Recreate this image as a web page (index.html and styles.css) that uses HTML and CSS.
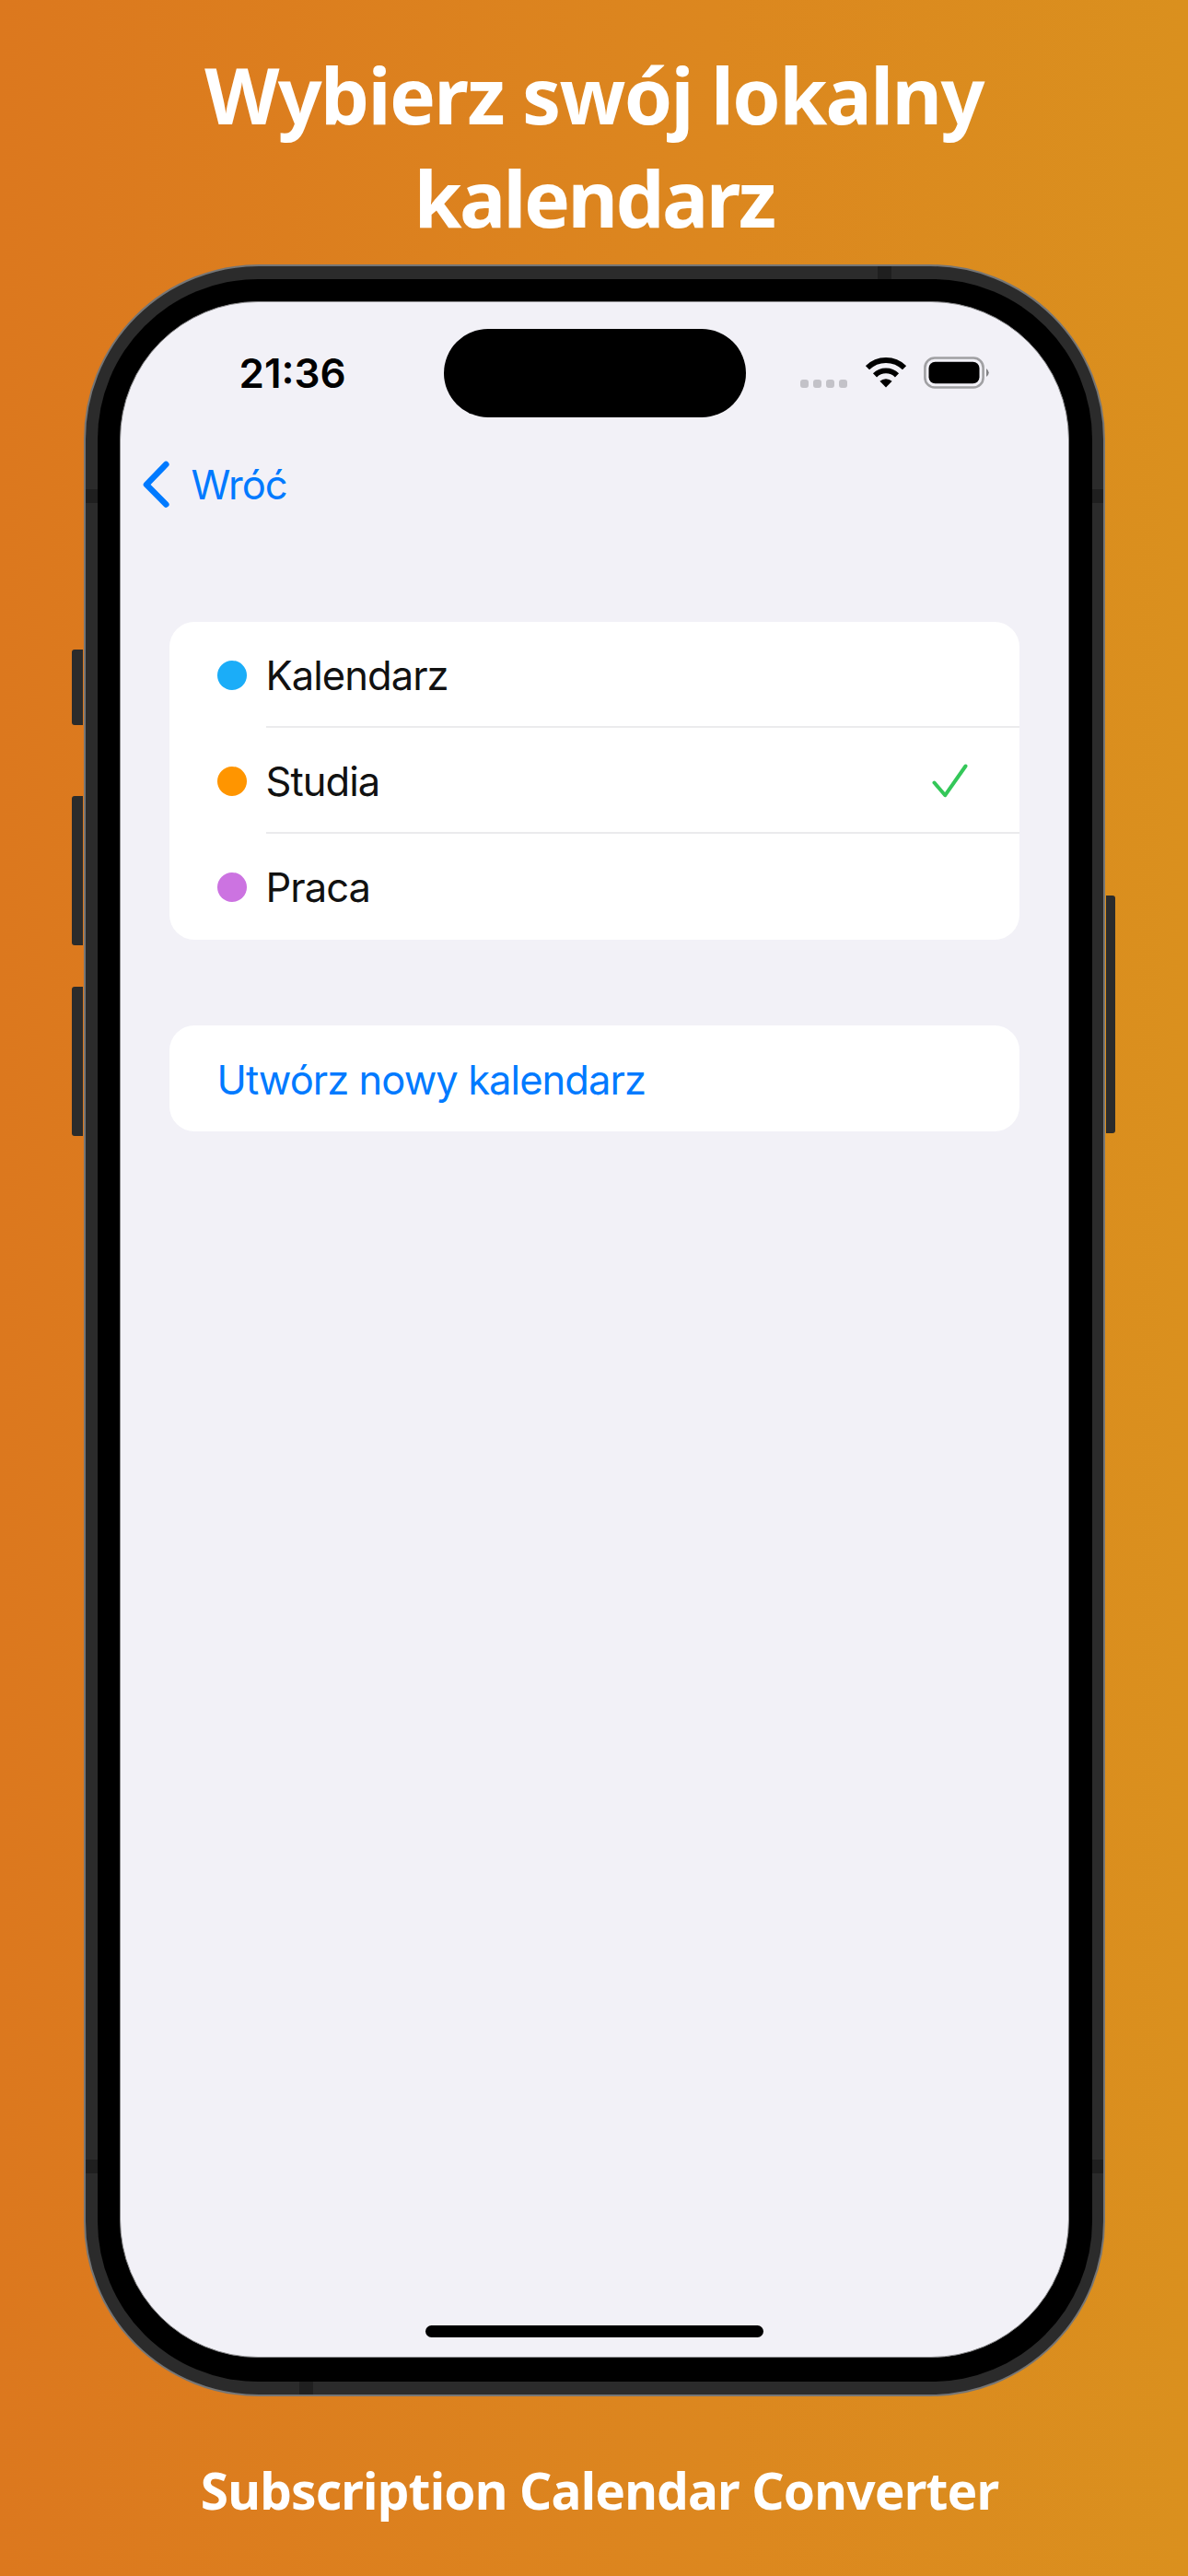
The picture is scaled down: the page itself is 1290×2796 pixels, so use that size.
FILE: index.html
```html
<!DOCTYPE html>
<html lang="pl">
<head>
<meta charset="utf-8">
<title>Subscription Calendar Converter</title>
<link rel="stylesheet" href="styles.css">
</head>
<body>
<main class="poster">
  <h1 class="headline">
    <span class="headline-top">Wybierz swój lokalny</span>
    <span class="headline-bottom">kalendarz</span>
  </h1>

  <div class="phone">
    <i class="key key-action"></i>
    <i class="key key-up"></i>
    <i class="key key-down"></i>
    <i class="key key-power"></i>
    <i class="band band-top"></i>
    <i class="band band-bottom"></i>
    <i class="band band-left band-upper"></i>
    <i class="band band-right band-upper"></i>
    <i class="band band-left band-lower"></i>
    <i class="band band-right band-lower"></i>
    <div class="bezel">
      <div class="screen">
        <header class="status">
          <span class="time">21:36</span>
          <span class="island"></span>
          <span class="indicators">
            <span class="signal"><i></i><i></i><i></i><i></i></span>
            <svg class="wifi" width="44" height="33" viewBox="0 0 44 33">
              <g fill="none" stroke="#000" stroke-width="5.8">
                <path d="M2 11.2A28.5 28.5 0 0 1 42 11.2"/>
                <path d="M10 19.4A17 17 0 0 1 34 19.4"/>
              </g>
              <path d="M22 32.4L15.4 25.8A9.6 9.6 0 0 1 28.6 25.8Z"/>
            </svg>
            <svg class="battery" width="72" height="35" viewBox="0 0 72 35">
              <rect x="1.4" y="1.5" width="63.2" height="32" rx="10.5" fill="none" stroke="#a0a0a3" stroke-width="2.6"/>
              <rect x="5.5" y="5.7" width="55" height="23.6" rx="7"/>
              <path d="M68 13Q73.5 17.5 68 22Z" fill="#828286"/>
            </svg>
          </span>
        </header>

        <nav class="back">
          <svg width="30" height="52" viewBox="0 0 30 52">
            <path d="M25.3 4L4 26L25.3 47.5" fill="none" stroke="#007aff" stroke-width="6.6" stroke-linecap="round" stroke-linejoin="round"/>
          </svg>
          <span>Wróć</span>
        </nav>

        <ul class="card calendars">
          <li class="row"><i class="dot blue"></i><span class="label">Kalendarz</span></li>
          <li class="row"><i class="dot orange"></i><span class="label">Studia
            <svg class="check" width="40" height="40" viewBox="0 0 40 40">
              <path d="M3.5 21.5L15.3 35.2L37.5 3.5" fill="none" stroke="#34c759" stroke-width="4" stroke-linecap="round" stroke-linejoin="round"/>
            </svg></span></li>
          <li class="row"><i class="dot purple"></i><span class="label">Praca</span></li>
        </ul>

        <div class="card create">Utwórz nowy kalendarz</div>

        <div class="home"></div>
      </div>
    </div>
  </div>

  <footer class="brand">Subscription Calendar Converter</footer>
</main>
</body>
</html>
```
FILE: styles.css
```css
* {
  box-sizing: border-box;
}

body {
  margin: 0;
}

.poster {
  width: 1290px;
  height: 2796px;
  overflow: hidden;
  display: flex;
  flex-direction: column;
  align-items: center;
  background: linear-gradient(90deg, #dc781e, #dc871f 60%, #da901e);
  font-family: "Noto Sans", "Open Sans", sans-serif;
  color: #fff;
}

.headline {
  margin: 0;
  padding-top: 47px;
  height: 287px;
  flex: none;
  display: flex;
  flex-direction: column;
  align-items: center;
  font-size: 84px;
  font-weight: 700;
  line-height: 112px;
  letter-spacing: -1.7px;
  white-space: nowrap;
}

.headline-bottom {
  letter-spacing: -2.6px;
}

.phone {
  position: relative;
  flex: none;
  width: 1109px;
  height: 2314px;
  padding: 14px 12px 14px 13px;
  border: 2px solid #767676;
  border-radius: 190px;
  background: #2b2b2b;
}

.key {
  position: absolute;
  width: 12px;
  left: -15px;
  border-radius: 3px 0 0 3px;
  background: #2b2b2b;
}

.key-action {
  top: 416px;
  height: 82px;
}

.key-up {
  top: 575px;
  height: 162px;
}

.key-down {
  top: 782px;
  height: 162px;
}

.key-power {
  left: 1108px;
  top: 683px;
  width: 10px;
  height: 258px;
  border-radius: 0 3px 3px 0;
}

.band {
  position: absolute;
  width: 15px;
  height: 15px;
  background: #1f1f1f;
}

.band-top {
  left: 860px;
  top: 0;
}

.band-bottom {
  left: 232px;
  bottom: 0;
}

.band-left {
  left: 0;
}

.band-right {
  right: 0;
}

.band-upper {
  top: 242px;
}

.band-lower {
  top: 2055px;
}

.bezel {
  position: relative;
  height: 100%;
  padding: 24px 25px 26px 24px;
  border-radius: 174px;
  background: #000;
}

.screen {
  height: 100%;
  display: flex;
  flex-direction: column;
  border: 1px solid #8b8b8d;
  border-radius: 150px;
  background: #f2f1f7;
  font-family: Inter, "Liberation Sans", sans-serif;
  font-size: 43.5px;
  letter-spacing: -0.95px;
  color: #111;
}

.status {
  display: flex;
  align-items: center;
  height: 96px;
  margin: 29px 85px 0 129px;
}

.time {
  width: 222px;
  font-size: 44px;
  font-weight: 600;
  letter-spacing: 0;
  color: #000;
}

.island {
  width: 328px;
  height: 96px;
  border-radius: 48px;
  background: #000;
}

.indicators {
  display: flex;
  align-items: center;
  margin: -2px 0 0 auto;
}

.signal {
  display: flex;
  gap: 5px;
  margin: 25px 20px 0 0;
}

.signal i {
  width: 9px;
  height: 9px;
  border-radius: 3px;
  background: #c3c2c8;
}

.battery {
  margin-left: 19px;
}

.back {
  display: flex;
  align-items: center;
  gap: 23px;
  height: 52px;
  margin: 47px 0 0 24px;
  color: #007aff;
}

.card {
  margin: 0 53px;
  padding: 0;
  border-radius: 27px;
  background: #fff;
}

.calendars {
  margin-top: 123px;
  list-style: none;
}

.row {
  display: flex;
  align-items: center;
  gap: 21px;
  height: 115px;
  padding-left: 52px;
}

.dot {
  width: 32px;
  height: 32px;
  border-radius: 50%;
}

.blue {
  background: #1badf8;
}

.orange {
  background: #ff9500;
}

.purple {
  background: #cc73e1;
}

.label {
  flex: 1;
  display: flex;
  align-items: center;
  justify-content: space-between;
  height: 115px;
  padding: 3px 56px 0 0;
  border-bottom: 2px solid #ebebed;
}

.row:last-child .label {
  border-bottom-color: transparent;
}

.create {
  height: 115px;
  margin-top: 93px;
  padding-left: 52px;
  line-height: 118px;
  color: #007aff;
}

.home {
  width: 367px;
  height: 13px;
  margin: auto auto 21px;
  border-radius: 7px;
  background: #000;
}

.brand {
  padding: 64px 0 0 12px;
  font-size: 55px;
  font-weight: 700;
  line-height: 76px;
  letter-spacing: -0.85px;
  white-space: nowrap;
}
```
